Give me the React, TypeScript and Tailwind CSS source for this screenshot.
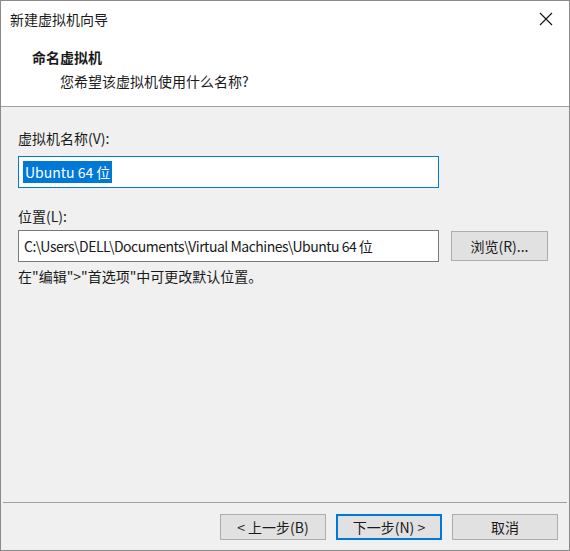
import React from "react";

const font = { fontFamily: '"Noto Sans CJK SC", "Noto Sans", sans-serif' };

function WizButton({ children, primary }: { children: React.ReactNode; primary?: boolean }) {
  return (
    <button
      type="button"
      className={`h-[26px] w-[106px] bg-[#e1e1e1] text-[14px] leading-none text-[#1a1a1a] ${
        primary ? "border-2 border-[#0078d7]" : "border border-[#adadad]"
      }`}
    >
      {children}
    </button>
  );
}

export default function App() {
  return (
    <div
      style={font}
      className="flex h-[551px] w-[570px] flex-col border border-[#8a8a8a] bg-[#f0f0f0] text-[14px] text-[#1a1a1a]"
    >
      {/* title bar + header */}
      <div className="bg-white">
        <div className="flex h-[36px] items-center justify-between pl-[9px] pr-[14px]">
          <span>新建虚拟机向导</span>
          <svg width="14" height="14" viewBox="0 0 14 14" className="mr-[2px]">
            <path d="M1 1L13 13M13 1L1 13" stroke="#111" strokeWidth="1.1" />
          </svg>
        </div>
        <div className="flex h-[69px] flex-col pl-[31px] pt-[9px]">
          <span className="font-bold leading-[22px]">命名虚拟机</span>
          <span className="pl-[28px] leading-[26px]">您希望该虚拟机使用什么名称?</span>
        </div>
      </div>
      <div className="h-px bg-[#a0a0a0]" />

      {/* body */}
      <div className="flex flex-1 flex-col pl-[17px] pr-[21px] pt-[18px]">
        <label className="leading-[26px]">虚拟机名称(V):</label>
        <div className="mt-[5px] flex h-[32px] w-[421px] items-center border border-[#0078d7] bg-white px-[4px]">
          <span className="bg-[#0078d7] px-[2px] leading-[22px] text-white">Ubuntu 64 位</span>
        </div>
        <label className="mt-[15px] leading-[26px]">位置(L):</label>
        <div className="mt-[1px] flex items-center justify-between">
          <div className="flex h-[32px] w-[421px] items-center border border-[#7a7a7a] bg-white px-[5px] tracking-[-0.5px]">
            C:\Users\DELL\Documents\Virtual Machines\Ubuntu 64 位
          </div>
          <button
            type="button"
            className="h-[30px] w-[97px] border border-[#adadad] bg-[#e1e1e1] text-[14px]"
          >
            浏览(R)...
          </button>
        </div>
        <p className="mt-[1px] leading-[26px]">在"编辑"&gt;"首选项"中可更改默认位置。</p>
      </div>

      {/* footer */}
      <div className="mx-[2px] h-[2px] border-t border-[#a0a0a0] border-b-white" />
      <div className="flex h-[46px] items-start justify-end gap-[10px] pr-[11px] pt-[10px]">
        <WizButton>&lt; 上一步(B)</WizButton>
        <WizButton primary>下一步(N) &gt;</WizButton>
        <WizButton>取消</WizButton>
      </div>
    </div>
  );
}
